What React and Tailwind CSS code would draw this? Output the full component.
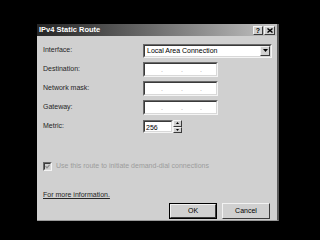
import React from 'react';

const font = { fontFamily: '"Liberation Sans", Arial, sans-serif' };

const Sunken = ({ className = '', children }) => (
  <div className={`border border-t-[#6a6a6a] border-l-[#6a6a6a] border-r-[#f4f4f4] border-b-[#f4f4f4] ${className}`}>
    <div className="h-full w-full border border-t-[#3a3a3a] border-l-[#3a3a3a] border-r-[#d8d8d8] border-b-[#d8d8d8] bg-white">
      {children}
    </div>
  </div>
);

const Raised = ({ className = '', children }) => (
  <div className={`border border-t-[#f2f2f2] border-l-[#f2f2f2] border-r-[#3a3a3a] border-b-[#3a3a3a] bg-[#d0d0d0] ${className}`}>
    {children}
  </div>
);

const IpBox = () => (
  <Sunken className="w-[75px] h-[15px]">
    <div className="flex h-full items-center text-[7px] text-[#a8a8a8] leading-none">
      <span className="ml-[16px]">.</span>
      <span className="ml-[18px]">.</span>
      <span className="ml-[17px]">.</span>
    </div>
  </Sunken>
);

const Row = ({ label, children }) => (
  <div className="flex h-[19px] items-center">
    <div className="w-[106px] pl-[6px] text-[#262626]">{label}</div>
    {children}
  </div>
);

const App = () => {
  return (
    <div className="w-[320px] h-[240px] bg-black pl-[37px] pt-[24px] text-[7px]" style={font}>
      <div className="w-[242px] h-[197px] bg-[#d0d0d0] border-r-2 border-b border-r-[#5a5a5a] border-b-[#9a9a9a] flex flex-col">
        <div className="h-[12px] flex items-center bg-gradient-to-r from-[#262626] via-[#707070] to-[#c4c4c4] pl-[2px] pr-[2px]">
          <span className="font-bold text-white text-[7.5px] leading-none">IPv4 Static Route</span>
          <div className="ml-auto flex gap-[1px]">
            <Raised className="w-[10px] h-[9px] flex items-center justify-center">
              <span className="font-bold text-[7px] leading-none text-black">?</span>
            </Raised>
            <Raised className="w-[11px] h-[9px] flex items-center justify-center">
              <svg width="6" height="5" viewBox="0 0 6 5">
                <path d="M0.5 0.5 L5.5 4.5 M5.5 0.5 L0.5 4.5" stroke="#000" strokeWidth="1.4" />
              </svg>
            </Raised>
          </div>
        </div>

        <div className="mt-[5px] flex flex-col">
          <Row label="Interface:">
            <Sunken className="w-[129px] h-[14px]">
              <div className="flex h-full items-center">
                <span className="pl-[2px] text-black leading-none">Local Area Connection</span>
                <Raised className="ml-auto w-[10px] h-full flex items-center justify-center">
                  <svg width="5" height="3" viewBox="0 0 5 3">
                    <path d="M0 0 H5 L2.5 3 Z" fill="#000" />
                  </svg>
                </Raised>
              </div>
            </Sunken>
          </Row>
          <Row label="Destination:"><IpBox /></Row>
          <Row label="Network mask:"><IpBox /></Row>
          <Row label="Gateway:"><IpBox /></Row>
          <Row label="Metric:">
            <div className="flex">
              <Sunken className="w-[30px] h-[13px]">
                <div className="pl-[1px] text-black leading-[11px]">256</div>
              </Sunken>
              <div className="flex flex-col">
                <Raised className="w-[9px] h-[6.5px] flex items-center justify-center">
                  <svg width="3" height="2" viewBox="0 0 3 2"><path d="M0 2 H3 L1.5 0 Z" fill="#000" /></svg>
                </Raised>
                <Raised className="w-[9px] h-[6.5px] flex items-center justify-center">
                  <svg width="3" height="2" viewBox="0 0 3 2"><path d="M0 0 H3 L1.5 2 Z" fill="#000" /></svg>
                </Raised>
              </div>
            </div>
          </Row>
        </div>

        <div className="mt-[25px] pl-[6px] flex items-center gap-[4px]">
          <Sunken className="w-[9px] h-[9px]">
            <div className="h-full w-full bg-[#d0d0d0] flex items-center justify-center">
              <svg width="5" height="5" viewBox="0 0 5 5">
                <path d="M0.5 2.2 L2 3.8 L4.6 0.8" stroke="#8a8a8a" strokeWidth="1.2" fill="none" />
              </svg>
            </div>
          </Sunken>
          <span className="text-[#9c9c9c]">Use this route to initiate demand-dial connections</span>
        </div>

        <div className="mt-[18px] pl-[6px]">
          <span className="underline text-[#262626]">For more information.</span>
        </div>

        <div className="mt-[3px] flex justify-end gap-[5px] pr-[7px]">
          <div className="border border-black">
            <Raised className="w-[46px] h-[14px] flex items-center justify-center">
              <span className="text-black">OK</span>
            </Raised>
          </div>
          <Raised className="w-[48px] h-[16px] flex items-center justify-center">
            <span className="text-black">Cancel</span>
          </Raised>
        </div>
      </div>
    </div>
  );
};

export default App;
